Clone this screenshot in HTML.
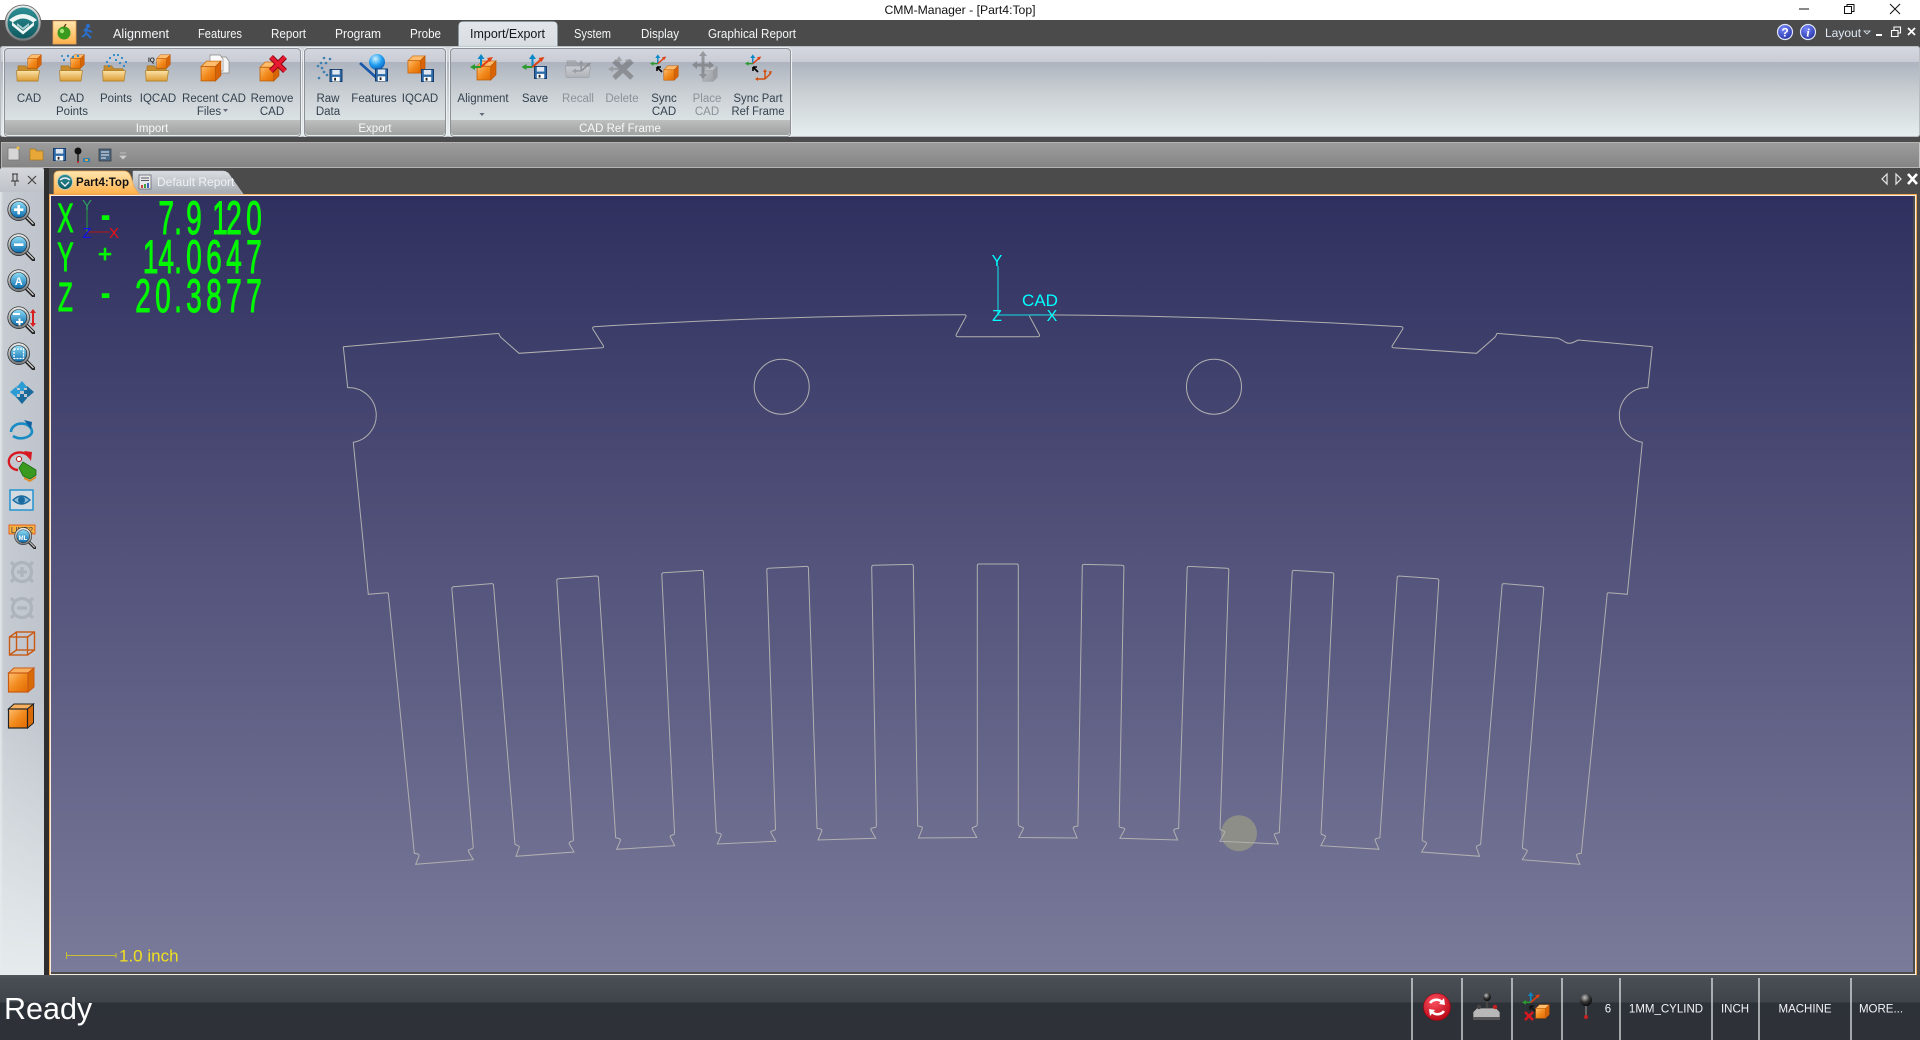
<!DOCTYPE html>
<html lang="en"><head><meta charset="utf-8"><title>CMM-Manager - [Part4:Top]</title>
<style>
html,body{margin:0;padding:0;width:1920px;height:1040px;overflow:hidden;background:#4b4b4b}
.a{position:absolute}
svg{position:absolute;left:0;top:0}
text{font-family:"Liberation Sans",sans-serif}
.tab{font-size:12.5px;fill:#f4f6f8;text-anchor:middle}
.lb{font-size:11.5px;fill:#34424f;text-anchor:middle}
.dis{fill:#8b9299}
.gr{font-size:11.5px;fill:#f6f8f8;text-anchor:middle}
.st{font-size:11.5px;fill:#f2f4f6;text-anchor:middle}
.seg{fill:#00f800;text-anchor:middle;stroke:#00f800;stroke-width:1}
.gray{filter:grayscale(1) opacity(.45)}
</style></head><body>
<div class="a" style="left:0;top:0;width:1920px;height:20px;background:#fff"></div>
<div class="a" style="left:0;top:20px;width:1920px;height:26px;background:#4b4b4b"></div>
<div class="a" style="left:0;top:46px;width:1920px;height:91px;border-radius:3px;box-shadow:inset 0 0 0 1px #b9bdc2;background:linear-gradient(180deg,#d6d9df 0,#c9ccd5 17.5%,#aeb4bf 17.6%,#c9ced3 50%,#e6eeee 100%)"></div>
<div class="a" style="left:4px;top:48px;width:295px;height:87px;border:1px solid #8d9298;border-radius:4px;box-shadow:0 0 0 1px #eef0f2"></div>
<div class="a" style="left:304px;top:48px;width:140px;height:87px;border:1px solid #8d9298;border-radius:4px;box-shadow:0 0 0 1px #eef0f2"></div>
<div class="a" style="left:450px;top:48px;width:339px;height:87px;border:1px solid #8d9298;border-radius:4px;box-shadow:0 0 0 1px #eef0f2"></div>
<div class="a" style="left:5px;top:120px;width:295px;height:15px;background:linear-gradient(#bdbfbf,#a0a2a2);border-radius:0 0 3px 3px"></div>
<div class="a" style="left:305px;top:120px;width:140px;height:15px;background:linear-gradient(#bdbfbf,#a0a2a2);border-radius:0 0 3px 3px"></div>
<div class="a" style="left:451px;top:120px;width:339px;height:15px;background:linear-gradient(#bdbfbf,#a0a2a2);border-radius:0 0 3px 3px"></div>
<div class="a" style="left:0;top:137px;width:1920px;height:5px;background:#4b4b4b"></div>
<div class="a" style="left:1px;top:142px;width:1917px;height:24px;border:1px solid #b4b4b4;border-right-color:#c8c8c8;background:linear-gradient(#9c9c9c,#858585)"></div>
<div class="a" style="left:0;top:168px;width:1920px;height:28px;background:#4b4b4b"></div>
<div class="a" style="left:0;top:168px;width:44px;height:24px;background:linear-gradient(#d4d7db,#bfc3c9);border-radius:2px 2px 0 0"></div>
<div class="a" style="left:44px;top:168px;width:5px;height:810px;background:#2e2e2e"></div>
<div class="a" style="left:0;top:192px;width:44px;height:786px;background:linear-gradient(90deg,#e3e6e9 0,#c6cbd2 8%,#bfc4cc 100%)"></div>
<div class="a" style="left:0;top:700px;width:44px;height:278px;background:linear-gradient(180deg,rgba(230,236,238,0),#e6ecee)"></div>
<div class="a" style="left:49px;top:194px;width:1866px;height:780px;border:1px solid #f2a850;box-shadow:inset 0 0 0 1px #f4ece0;box-sizing:content-box"></div>
<div class="a" style="left:51px;top:196px;width:1862px;height:776px;background:linear-gradient(#303060,#7a7a9a)"></div>
<div class="a" style="left:0;top:975px;width:1920px;height:65px;background:linear-gradient(#50565b 0,#484e54 4px,#3f444a 42%,#2d3138 42.1%,#2e3238 100%)"></div>

<svg width="1920" height="1040" viewBox="0 0 1920 1040" xmlns="http://www.w3.org/2000/svg">
<defs>
<linearGradient id="o" x1="0" y1="0" x2="1" y2="1"><stop offset="0" stop-color="#ffc070"/><stop offset=".5" stop-color="#f28a1e"/><stop offset="1" stop-color="#e06a00"/></linearGradient>
<linearGradient id="f" x1="0" y1="0" x2="0" y2="1"><stop offset="0" stop-color="#fbe4a8"/><stop offset="1" stop-color="#dc9c34"/></linearGradient>
<linearGradient id="bl" x1="0" y1="0" x2="0" y2="1"><stop offset="0" stop-color="#8edcf6"/><stop offset="1" stop-color="#0a6cae"/></linearGradient>
<linearGradient id="teal" x1="0" y1="0" x2="0" y2="1"><stop offset="0" stop-color="#2e8f94"/><stop offset="1" stop-color="#0e5a60"/></linearGradient>
<linearGradient id="rim" x1="0" y1="0" x2="0" y2="1"><stop offset="0" stop-color="#eef0f0"/><stop offset="1" stop-color="#70767a"/></linearGradient>
<linearGradient id="aT" x1="0" y1="0" x2="0" y2="1"><stop offset="0" stop-color="#ffe6b0"/><stop offset="1" stop-color="#ffb04a"/></linearGradient>
<linearGradient id="gT" x1="0" y1="0" x2="0" y2="1"><stop offset="0" stop-color="#dadee2"/><stop offset="1" stop-color="#a4a9b1"/></linearGradient>
<radialGradient id="rd" cx=".4" cy=".3" r=".8"><stop offset="0" stop-color="#ff5060"/><stop offset="1" stop-color="#b00010"/></radialGradient>
<radialGradient id="ball" cx=".4" cy=".3" r=".8"><stop offset="0" stop-color="#c0c0c0"/><stop offset=".5" stop-color="#333"/><stop offset="1" stop-color="#000"/></radialGradient>
<radialGradient id="bb" cx=".4" cy=".3" r=".8"><stop offset="0" stop-color="#d0f0ff"/><stop offset=".5" stop-color="#22a0f0"/><stop offset="1" stop-color="#0a50b0"/></radialGradient>
<radialGradient id="hp" cx=".4" cy=".3" r=".8"><stop offset="0" stop-color="#7a88ff"/><stop offset="1" stop-color="#1c2a9c"/></radialGradient>

<symbol id="cube" viewBox="0 0 20 20"><polygon points="1,6 6,1 19,1 14,6" fill="#ffbc6c" stroke="#c86a10" stroke-width=".7"/><polygon points="14,6 19,1 19,14 14,19" fill="#d96408" stroke="#b85400" stroke-width=".7"/><rect x="1" y="6" width="13" height="13" fill="url(#o)" stroke="#c06008" stroke-width=".8"/></symbol>
<symbol id="folder" viewBox="0 0 26 20"><path d="M2 19V3h8l2 3h10v13z" fill="#c88c2c" stroke="#a47420" stroke-width=".8"/><path d="M1 19L0.5 8h24l-1.5 11z" fill="url(#f)" stroke="#b08028" stroke-width=".8"/></symbol>
<symbol id="floppy" viewBox="0 0 14 14"><rect x=".5" y=".5" width="13" height="13" fill="#2f6aa8" stroke="#143a68"/><rect x="3" y="1" width="8" height="5" fill="#dfe8f2"/><rect x="3" y="8.5" width="8" height="5" fill="#fff"/><rect x="5" y="9.5" width="2" height="3" fill="#222"/></symbol>
<symbol id="axes" viewBox="0 0 24 20"><path d="M11 13V3" stroke="#0a88c8" stroke-width="2" fill="none"/><path d="M11 0l-3.5 5h7z" fill="#0a88c8"/><path d="M11 13H4" stroke="#2a9a30" stroke-width="2"/><path d="M0 13l5-3v6z" fill="#2a9a30"/><path d="M11 13l8-7" stroke="#e04010" stroke-width="2"/><path d="M23 3l-6 1 3 4z" fill="#e04010"/></symbol>
<symbol id="mag" viewBox="0 0 36 36"><path d="M24 24l10 10" stroke="#222" stroke-width="5" stroke-linecap="round"/><path d="M24.500 24l9 9" stroke="#ccc" stroke-width="1.800" stroke-linecap="round"/><circle cx="15" cy="15" r="14" fill="url(#rim)" stroke="#333" stroke-width="1"/><circle cx="15" cy="15" r="10.500" fill="url(#bl)" stroke="#222" stroke-width=".8"/></symbol>
</defs>

<!-- Title bar -->
<text x="960" y="14" font-size="12.2" fill="#111" text-anchor="middle">CMM-Manager - [Part4:Top]</text>
<path d="M1799 9h10" stroke="#111"/>
<path d="M1844.500 6.500h7v7h-7zM1847 6.500v-2h7v7h-2.500" fill="none" stroke="#111"/>
<path d="M1890 4l10 10M1900 4l-10 10" stroke="#111"/>

<!-- Logo -->
<circle cx="23" cy="23" r="18" fill="url(#rim)" stroke="#555" stroke-width=".8"/>
<circle cx="23" cy="23" r="15.500" fill="url(#teal)"/>
<path d="M9 20q14-12 28 0l-4 2.500q-10-8-20 0z" fill="#eef6f6"/>
<path d="M12 22l11 9 11-9 0 3.500-11 9-11-9z" fill="#eef6f6"/>
<path d="M17 23l6 4.500 6-4.500v2.500l-6 4.500-6-4.500z" fill="#a8d0d2"/>

<!-- QAT upper icons -->
<rect x="53" y="21" width="23" height="23" fill="url(#aT)" stroke="#e8a050" stroke-width=".8"/>
<circle cx="64" cy="33" r="6.500" fill="#3a9a20"/><circle cx="62" cy="31" r="2.200" fill="#a0e070"/><path d="M64 27l2-3" stroke="#5a3a10" stroke-width="1.300"/>
<circle cx="88" cy="26" r="2" fill="#2a70d0"/><path d="M87 28l-1 6-4 3M87 30l5 2M87 34l4 4M84 31l3-3" stroke="#2a70d0" stroke-width="2" fill="none"/>

<!-- Ribbon tabs -->
<path d="M459 46V26q0-4 4-4h90q4 0 4 4v20z" fill="#e4e8ec" stroke="#cfe0e8"/>
<path d="M460 46V26q0-3 3-3h90q3 0 3 3v20z" fill="url(#gT)" opacity=".18"/>
<text class="tab" x="141" y="38" textLength="56" lengthAdjust="spacingAndGlyphs">Alignment</text>
<text class="tab" x="220" y="38" textLength="44" lengthAdjust="spacingAndGlyphs">Features</text>
<text class="tab" x="288.500" y="38" textLength="35" lengthAdjust="spacingAndGlyphs">Report</text>
<text class="tab" x="358" y="38" textLength="46" lengthAdjust="spacingAndGlyphs">Program</text>
<text class="tab" x="425.500" y="38" textLength="31" lengthAdjust="spacingAndGlyphs">Probe</text>
<text class="tab" style="fill:#14181c" x="507.500" y="38" textLength="75" lengthAdjust="spacingAndGlyphs">Import/Export</text>
<text class="tab" x="592.500" y="38" textLength="37" lengthAdjust="spacingAndGlyphs">System</text>
<text class="tab" x="660" y="38" textLength="38" lengthAdjust="spacingAndGlyphs">Display</text>
<text class="tab" x="752" y="38" textLength="88" lengthAdjust="spacingAndGlyphs">Graphical Report</text>

<!-- Help / layout -->
<circle cx="1785" cy="32" r="7.500" fill="url(#hp)" stroke="#dfe6f6" stroke-width="1.200"/>
<text x="1785" y="36.500" font-size="12" font-weight="bold" fill="#fff" text-anchor="middle">?</text>
<circle cx="1808" cy="32" r="7.500" fill="url(#hp)" stroke="#dfe6f6" stroke-width="1.200"/>
<text x="1808" y="36.500" font-size="12" font-weight="bold" font-style="italic" fill="#fff" text-anchor="middle" style="font-family:'Liberation Serif',serif">i</text>
<text x="1825" y="37" font-size="12" fill="#dfeaf6">Layout</text>
<path d="M1864 31l3 3 3-3z" fill="none" stroke="#dfeaf6" stroke-width=".8"/>
<rect x="1876" y="34" width="6" height="2" fill="#fff"/>
<path d="M1891.500 30.500h6.500v6h-6.500zM1894 30v-3h6.500v6h-2.500" fill="none" stroke="#fff" stroke-width="1.100"/>
<path d="M1908 28l7 7M1915 28l-7 7" stroke="#fff" stroke-width="1.800"/>

<!-- Import group icons -->
<use href="#folder" x="16" y="63" width="25" height="19"/>
<use href="#cube" x="27" y="54" width="15" height="15"/>
<use href="#folder" x="59" y="63" width="25" height="19"/>
<use href="#cube" x="70" y="54" width="15" height="15"/>
<g fill="#2a88c8"><circle cx="64" cy="60" r="1.200"/><circle cx="68" cy="56" r="1.200"/><circle cx="73" cy="57" r="1.200"/><circle cx="78" cy="56" r="1.200"/><circle cx="62" cy="56" r="1"/></g>
<use href="#folder" x="102" y="63" width="25" height="19"/>
<g fill="#2a88c8"><circle cx="107" cy="62" r="1.100"/><circle cx="110" cy="58" r="1.100"/><circle cx="114" cy="55" r="1.100"/><circle cx="118" cy="55" r="1.100"/><circle cx="122" cy="58" r="1.100"/><circle cx="126" cy="62" r="1.100"/><circle cx="124" cy="66" r="1.100"/><circle cx="109" cy="66" r="1.100"/><circle cx="116" cy="60" r="1.100"/><circle cx="120" cy="63" r="1.100"/></g>
<use href="#folder" x="145" y="63" width="25" height="19"/>
<use href="#cube" x="156" y="54" width="15" height="15"/>
<text x="148" y="62" font-size="6.500" font-weight="bold" fill="#222">IQ</text>
<path d="M216 57h10l3 4v12h-13z" fill="#f4f4f4" stroke="#888" stroke-width=".7"/>
<path d="M210 55h10l3 4v12h-13z" fill="#fafafa" stroke="#888" stroke-width=".7"/>
<use href="#cube" x="200" y="60" width="22" height="22"/>
<use href="#cube" x="259" y="61" width="21" height="21"/>
<path d="M271 57l14 14M285 57l-14 14" stroke="#8a0a14" stroke-width="5.500"/>
<path d="M271 57l14 14M285 57l-14 14" stroke="#e81830" stroke-width="3.500"/>

<!-- Export icons -->
<g fill="#3a80b0"><circle cx="324" cy="58" r="1.300"/><circle cx="330" cy="59" r="1.300"/><circle cx="321" cy="63" r="1.300"/><circle cx="326" cy="63" r="1.300"/><circle cx="318" cy="66" r="1.300"/><circle cx="322" cy="68" r="1.300"/><circle cx="324" cy="72" r="1.300"/><circle cx="327" cy="75" r="1.300"/><circle cx="319" cy="78" r="1.300"/></g>
<use href="#floppy" x="329" y="69" width="14" height="13"/>
<path d="M360 63l20 18" stroke="#1858a8" stroke-width="2.600"/>
<circle cx="377" cy="62" r="8" fill="url(#bb)"/>
<use href="#floppy" x="375" y="68" width="13" height="14"/>
<use href="#cube" x="407" y="55" width="19" height="19"/>
<use href="#floppy" x="421" y="69" width="13" height="13"/>

<!-- CAD Ref Frame icons -->
<use href="#cube" x="476" y="60" width="21" height="21"/>
<use href="#axes" x="469" y="54" width="26" height="20"/>
<use href="#floppy" x="534" y="65" width="13" height="15"/>
<use href="#axes" x="521" y="54" width="25" height="20"/>
<g class="gray"><use href="#folder" x="565" y="56" width="27" height="24"/><use href="#axes" x="572" y="60" width="20" height="17"/></g>
<g class="gray"><use href="#axes" x="608" y="54" width="24" height="24"/><path d="M614 61l18 17M632 61l-18 17" stroke="#555" stroke-width="5"/></g>
<use href="#axes" x="650" y="54" width="17" height="15"/>
<path d="M657 67l5 5m-5-5v4m0-4h4" stroke="#000" stroke-width="1.600" fill="none"/>
<use href="#cube" x="663" y="65" width="16" height="16"/>
<g class="gray"><use href="#cube" x="700" y="66" width="20" height="16"/><path d="M703 56v18M694 65h18" stroke="#555" stroke-width="3"/><path d="M703 51l-4 5h8zM703 79l-4-5h8zM692 65l5-4v8zM714 65l-5-4v8z" fill="#555"/></g>
<use href="#axes" x="745" y="54" width="17" height="15"/>
<path d="M753 67l5 5m-5-5v4m0-4h4" stroke="#000" stroke-width="1.600" fill="none"/>
<path d="M765 79V71M765 79h-8M765 79l6-6" stroke="#d05010" stroke-width="1.500"/><path d="M765 69l-2 3h4zM755 79l3-2v4zM772 71l-3.500 .5 2 3z" fill="#d05010"/>

<!-- Ribbon labels -->
<text class="lb" x="29" y="102">CAD</text>
<text class="lb" x="72" y="102">CAD</text><text class="lb" x="72" y="115">Points</text>
<text class="lb" x="116" y="102">Points</text>
<text class="lb" x="158" y="102">IQCAD</text>
<text class="lb" x="214" y="102">Recent CAD</text><text class="lb" x="209" y="115">Files</text>
<path d="M223 109h5l-2.500 3z" fill="#667"/>
<text class="lb" x="272" y="102">Remove</text><text class="lb" x="272" y="115">CAD</text>
<text class="lb" x="328" y="102">Raw</text><text class="lb" x="328" y="115">Data</text>
<text class="lb" x="374" y="102">Features</text>
<text class="lb" x="420" y="102">IQCAD</text>
<text class="lb" x="483" y="102">Alignment</text>
<path d="M479.500 113h5l-2.500 3z" fill="#667"/>
<text class="lb" x="535" y="102">Save</text>
<text class="lb dis" x="578" y="102">Recall</text>
<text class="lb dis" x="622" y="102">Delete</text>
<text class="lb" x="664" y="102">Sync</text><text class="lb" x="664" y="115">CAD</text>
<text class="lb dis" x="707" y="102">Place</text><text class="lb dis" x="707" y="115">CAD</text>
<text class="lb" x="758" y="102" textLength="49" lengthAdjust="spacingAndGlyphs">Sync Part</text><text class="lb" x="758" y="115" textLength="53" lengthAdjust="spacingAndGlyphs">Ref Frame</text>
<text class="gr" x="152" y="132">Import</text>
<text class="gr" x="375" y="132">Export</text>
<text class="gr" x="620" y="132">CAD Ref Frame</text>

<!-- Quick access -->
<path d="M8 148h9l2 2v10H8z" fill="#d6d6d6" stroke="#777" stroke-width=".8"/><circle cx="18" cy="148" r="1.500" fill="#f0c040"/>
<path d="M30 160v-11h5l1.500 2H43v9z" fill="#e8a838" stroke="#a87820" stroke-width=".7"/>
<use href="#floppy" x="53" y="148" width="13" height="13"/>
<circle cx="78" cy="151" r="3.500" fill="#111"/><path d="M78 154v8" stroke="#222" stroke-width="1.500"/><circle cx="78" cy="162" r="1" fill="#d02020"/><rect x="83" y="158" width="7" height="4" fill="#3080b0"/><rect x="85" y="159" width="3" height="2" fill="#e0a040"/>
<rect x="99" y="149" width="12" height="12" fill="#4a6a8a" stroke="#333" stroke-width=".7"/><path d="M101 152h8M101 155h8M101 158h5" stroke="#eee"/>
<path d="M120 153h6M120 156h6l-3 3z" fill="#ccc" stroke="#ccc" stroke-width=".7"/>

<!-- Panel header -->
<path d="M12 174h6M13 174v7M17 174v7M11 181h8M15 181v5" stroke="#333" stroke-width="1" fill="none"/>
<path d="M28 176l8 8M36 176l-8 8" stroke="#444" stroke-width="1.200"/>

<!-- Doc tabs -->
<path d="M133 171h90q5 0 8 6l12 17H133z" fill="url(#gT)" stroke="#c4c8cc" stroke-width=".6"/>
<path d="M54 194v-18q0-5 5-5h65q5 0 7 6l3 10 5 7z" fill="url(#aT)" stroke="#f0a850" stroke-width=".8"/>
<circle cx="65" cy="182" r="7.500" fill="url(#teal)" stroke="#bcc" stroke-width=".8"/>
<path d="M60 180q5-4 10 0M61 182l4 4 4-4" stroke="#eef" stroke-width="1.400" fill="none"/>
<text x="76" y="186" font-size="12" font-weight="bold" fill="#111" textLength="53" lengthAdjust="spacingAndGlyphs">Part4:Top</text>
<rect x="139" y="175" width="12" height="14" fill="#e8e8e8" stroke="#667" stroke-width=".8"/>
<path d="M141 178h8M141 180.500h8" stroke="#556"/><rect x="141" y="185" width="2" height="3" fill="#d04040"/><rect x="144" y="184" width="2" height="4" fill="#40a040"/><rect x="147" y="183" width="2" height="5" fill="#4060c0"/>
<text x="157" y="186" font-size="12" fill="#eef2f4">Default Report</text>
<path d="M1887 174l-5 5 5 5z" fill="none" stroke="#e8e8e8" stroke-width="1.200"/>
<path d="M1896 174l5 5-5 5z" fill="none" stroke="#e8e8e8" stroke-width="1.200"/>
<path d="M1908 174l9 10M1917 174l-9 10" stroke="#fff" stroke-width="2.600"/>

<!-- Left toolbar icons -->
<use href="#mag" x="7" y="198" width="28" height="28"/>
<path d="M14 209.700h9.400M18.700 205v9.400" stroke="#fff" stroke-width="2.600"/>
<use href="#mag" x="7" y="233" width="28" height="28"/>
<path d="M14 244.700h9.400" stroke="#fff" stroke-width="2.600"/>
<use href="#mag" x="7" y="269" width="28" height="28"/>
<text x="18.700" y="285" font-size="11" font-weight="bold" fill="#fff" text-anchor="middle">A</text>
<use href="#mag" x="7" y="306" width="28" height="28"/>
<path d="M13 314h7M16 322h7M19.500 318.500v7" stroke="#fff" stroke-width="2"/>
<path d="M33 311v14" stroke="#d82020" stroke-width="2"/><path d="M33 309l-3 4h6zM33 327l-3-4h6z" fill="#d82020"/>
<use href="#mag" x="7" y="342" width="28" height="28"/>
<rect x="14" y="349" width="9.500" height="9.500" fill="none" stroke="#fff" stroke-width="1.300" stroke-dasharray="2 1"/>
<path d="M22 381l-6 7h4v3h4v-3h4zM10 392l7-6v4h3v4h-3v4z" fill="#2a9cd4"/>
<path d="M22 404l-6-7h4v-3h4v3h4zM34 392l-7-6v4h-3v4h3v4z" fill="#1a6a9c"/>
<path d="M11 432a10 8 0 1 1 21 0a11 7 0 0 1-19 4" fill="none" stroke="#1a8cc4" stroke-width="2.600"/><path d="M24 420l8 2-1 7" fill="#1060a0"/>
<path d="M9 463a11 9 0 0 1 21-5" fill="none" stroke="#d81820" stroke-width="2.400"/><path d="M9 463a10 8 0 0 0 9 7" fill="none" stroke="#d81820" stroke-width="2.400"/><path d="M24 451l8 1-1 9z" fill="#d81820"/><circle cx="19" cy="459" r="2.500" fill="#fff" stroke="#c01010"/>
<path d="M19 468l4-6 13 8 0 5-6 4-7-3z" fill="#3a9a20" stroke="#1c6a10" stroke-width=".8"/><path d="M24 477l6 3 6-4v2l-6 4-6-3z" fill="#e08820"/>
<rect x="10" y="490" width="23" height="20" fill="#d4dce2" stroke="#1a90d0" stroke-width="1.400"/>
<path d="M13 500q8.500-8 17 0q-8.500 8-17 0z" fill="#8cbcd8" stroke="#1a6aa0" stroke-width="1.400"/><circle cx="21.500" cy="500" r="3.500" fill="#1a6aa0"/>
<rect x="9" y="525" width="26" height="9" fill="#f8b040" stroke="#e06020"/>
<text x="22" y="533" font-size="8" fill="#444" text-anchor="middle">LINE2</text>
<use href="#mag" x="14" y="527" width="22" height="22"/>
<text x="23" y="540" font-size="6" font-weight="bold" fill="#fff" text-anchor="middle">ML</text>
<g fill="none" stroke="#aeb4bc" stroke-width="3.200"><circle cx="22" cy="572" r="9.500"/><path d="M11 562l4 4M33 562l-4 4M11 582l4-4M33 582l-4-4M17 572h10M22 567v10"/><circle cx="22" cy="608" r="9.500"/><path d="M11 598l4 4M33 598l-4 4M11 618l4-4M33 618l-4-4M17 608h10"/></g>
<g fill="none" stroke="#c85a14" stroke-width="1.400"><rect x="9.500" y="637" width="18" height="18"/><rect x="16.500" y="632" width="18" height="18"/><path d="M9.500 637l7-5M27.500 637l7-5M27.500 655l7-5M9.500 655l7-5"/></g>
<polygon points="8.500,673 14,668 34,668 28,673" fill="#f8b060" stroke="#c85a14" stroke-width="1"/><polygon points="28,673 34,668 34,687 28,692" fill="#d86a08" stroke="#c85a14" stroke-width="1"/><rect x="8.500" y="673" width="19.500" height="19" fill="url(#o)" stroke="#c85a14" stroke-width="1.200"/>
<polygon points="8.500,709 14,704 33.500,704 27.500,709" fill="#f8b060" stroke="#222" stroke-width="1"/><polygon points="27.500,709 33.500,704 33.500,723 27.500,728" fill="#d86a08" stroke="#222" stroke-width="1"/><rect x="8.500" y="709" width="19" height="19" fill="url(#o)" stroke="#222" stroke-width="1.200"/>

<!-- Canvas: probe dot -->
<circle cx="1239" cy="833.300" r="18" fill="#8e8e88"/>

<!-- Part geometry -->
<g fill="none" stroke="#b0b0b0" stroke-width="1">
<g id="h">
<path d="M998 336.700H958Q955.500 336.500 956.300 334.500L966 316.500Q966.300 314.700 964.500 314.700A6670 6670 0 0 0 594 326.700Q592 327 593 329.300L603.500 346Q604 347.700 602 347.800L519 353.300 500.500 337Q499.300 335.500 498.800 333.400"/>
<path d="M343.300 346.700L347.700 387.700A27.500 27.500 0 0 1 353.300 442.300L368.300 594.300 386.500 592.800Q388.200 592.600 388.400 594L414.300 853.300 418 854Q419.500 854.600 419 856L415.700 864.300 473.300 859.700 468.500 851.500Q468 850 469.500 849.700L472.500 848.500Q473.300 848 473.200 847L451.900 589Q451.700 587 453.500 586.800L491.500 583.600Q493.300 583.500 493.500 585L515 844.300 518 845.700Q519.600 846.200 519.200 847.500L516 856.300 574 852 569.300 844Q568.800 842.600 570 842L573 840.800Q573.500 840.300 573.400 839L556.800 581Q556.600 579 558.400 578.800L596.500 576Q598.200 576 598.400 577.500L615.700 837.700 619 838.500Q620.800 839 620.400 840.500L616.700 849.300 674.700 845.700 670.300 837Q669.800 836 671 835.500L674 834.400Q674.600 834 674.500 832.500L661.800 575Q661.600 573 663.400 572.800L701.500 570.400Q703.200 570.300 703.400 572L716.300 832.700 720 833.500Q721.600 834 721.100 835.500L717.300 844 775.700 841.300 771 832.700Q770.400 831.700 771.500 831.200L775 830Q775.600 829.300 775.500 828L766.800 570Q766.700 568.300 768.400 568.200L806.500 566.400Q808.200 566.300 808.400 568L817 828.300 820.500 829Q822.200 829.600 821.800 831L818 840 875.700 838.300 871 829.700Q870.400 828.700 871.500 828.200L875.500 827.300Q876.400 826.800 876.400 825.500L871.700 567Q871.700 565.300 873.400 565.200L911.500 564.400Q913.200 564.400 913.300 566L917.700 826 921 826.600Q922.800 827.200 922.300 828.500L918.500 838 976.800 837.500 972.300 829Q971.800 828 972.800 827.500L976.500 826Q977.300 825.500 977.300 824V565.500Q977.300 564 979 564H998"/>
</g>
<path d="M498.800 333.400L343.300 346.700"/>
<use href="#h" transform="translate(1995.600 0) scale(-1 1)"/>
<path d="M1496.800 333.400L1558.300 338.300Q1563 340.500 1566 342.500Q1569 344 1573 342.500L1578.300 340 1652.300 346.700"/>
<circle cx="781.700" cy="386.700" r="27.500"/>
<circle cx="1214" cy="386.700" r="27.500"/>
</g>

<!-- CAD triad -->
<path d="M998 266V315H1050" fill="none" stroke="#1fa8bc" stroke-width="1.600"/>
<text x="997" y="266" font-size="16" fill="#00ffff" text-anchor="middle">Y</text>
<text x="997" y="321" font-size="16" fill="#00ffff" text-anchor="middle">Z</text>
<text x="1052" y="321" font-size="16" fill="#00ffff" text-anchor="middle">X</text>
<text x="1040" y="306" font-size="17" fill="#00ffff" text-anchor="middle">CAD</text>

<!-- DRO axes -->
<path d="M87 205V232" stroke="#2a7a4a" stroke-width="1.500"/><path d="M87 232H110" stroke="#8a2030" stroke-width="1.500"/>
<text x="87" y="210" font-size="15" fill="#2f9a5f" text-anchor="middle">Y</text>
<text x="87" y="238" font-size="15" fill="#1010f0" text-anchor="middle">Z</text>
<text x="114" y="238" font-size="15" fill="#f01010" text-anchor="middle">X</text>

<!-- DRO readout -->
<text x="105" y="262" font-size="24" fill="#00f800" stroke="#00f800" stroke-width=".8" text-anchor="middle">+</text>
<g transform="scale(.6 1)">
<text class="seg" font-size="41" x="109" y="232">X</text>
<text class="seg" font-size="41" x="109" y="271">Y</text>
<text class="seg" font-size="41" x="109" y="311">Z</text>
<g font-size="47">
<text class="seg" x="176" y="230">-</text>
<text class="seg" x="176" y="308">-</text>
<text class="seg" x="277 296.700 323.300 366.700 390 423.300" y="234">7.9120</text>
<text class="seg" x="251 277 296.700 323.300 356.700 390 423.300" y="273">14.0647</text>
<text class="seg" x="238.300 271.700 296.700 323.300 356.700 390 423.300" y="312">20.3877</text>
</g>
</g>

<!-- Scale bar -->
<path d="M66 955.500H116M66.500 952V959M116 953V958" stroke="#c8c030" stroke-width="1"/>
<text x="119" y="961.500" font-size="17" fill="#f0e020">1.0 inch</text>

<!-- Status bar -->
<text x="4" y="1019" font-size="30.500" fill="#fff">Ready</text>
<g stroke="#e4e6e8" stroke-width="1.300"><path d="M1412 978v62M1462 978v62M1512 978v62M1562 978v62M1620 978v62M1712 978v62M1759 978v62M1851 978v62"/></g>
<circle cx="1437" cy="1007" r="13.500" fill="url(#rd)" stroke="#a00010" stroke-width=".6"/>
<path d="M1430 1003a8 8 0 0 1 12-1M1444 1011a8 8 0 0 1-12 1" fill="none" stroke="#fff" stroke-width="2.600"/>
<path d="M1444 998l1 7-6-1zM1430 1016l-1-7 6 1z" fill="#fff"/>
<path d="M1473 1019v-7l4-4h19l4 4v7z" fill="#b8b8b8" stroke="#333" stroke-width=".7"/><rect x="1473" y="1017" width="27" height="3" fill="#555"/>
<path d="M1487 1008v-9" stroke="#444" stroke-width="2.500"/><circle cx="1487" cy="997" r="4" fill="url(#ball)"/>
<circle cx="1479" cy="1007" r="2.200" fill="#444"/><circle cx="1495" cy="1007" r="2.200" fill="#c02020"/>
<use href="#axes" x="1522" y="992" width="19" height="16"/>
<path d="M1530 1006l5 5m-5-5v4m0-4h4" stroke="#111" stroke-width="1.500" fill="none"/>
<use href="#cube" x="1535" y="1004" width="15" height="15"/>
<path d="M1525 1012l8 8M1533 1012l-8 8" stroke="#d81820" stroke-width="2.600"/>
<circle cx="1586" cy="1000" r="6" fill="url(#ball)"/><path d="M1586 1006v10" stroke="#666" stroke-width="2"/><circle cx="1586" cy="1017" r="2" fill="#c82020"/>
<text class="st" x="1608" y="1012.500" font-size="12">6</text>
<text class="st" x="1666" y="1012.500">1MM_CYLIND</text>
<text class="st" x="1735" y="1012.500">INCH</text>
<text class="st" x="1805" y="1012.500">MACHINE</text>
<text class="st" x="1881" y="1012.500">MORE...</text>
</svg>
</body></html>
